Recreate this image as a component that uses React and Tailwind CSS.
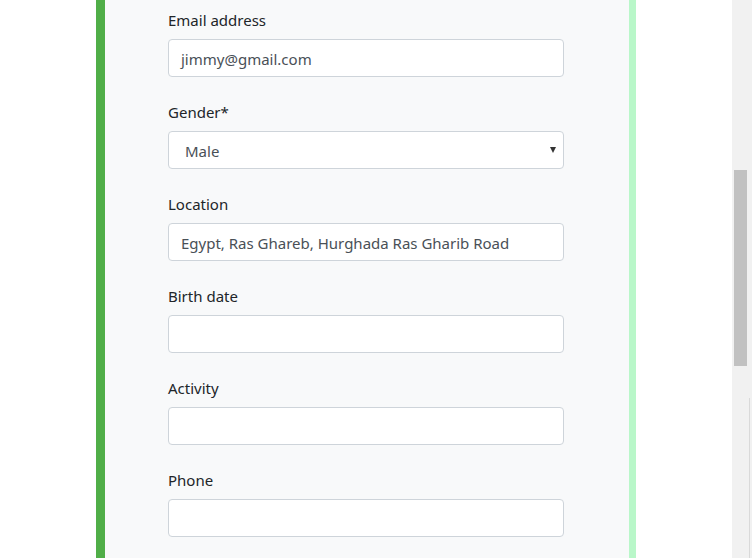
export default function App() {
  const fields = [
    { label: "Email address", value: "jimmy@gmail.com" },
    { label: "Gender*", value: "Male", select: true },
    { label: "Location", value: "Egypt, Ras Ghareb, Hurghada Ras Gharib Road" },
    { label: "Birth date", value: "" },
    { label: "Activity", value: "" },
    { label: "Phone", value: "" },
  ];

  return (
    <main
      className="flex h-[558px] w-[752px] overflow-hidden bg-white text-[#212529]"
      style={{ fontFamily: '"Noto Sans", "Open Sans", sans-serif' }}
    >
      <div className="w-[96px] shrink-0" />
      <div className="w-[540px] shrink-0 border-l-[9px] border-r-[7px] border-l-[#50ae48] border-r-[#b9f7c9] bg-[#f8f9fa] pl-[63px] pt-[7px]">
        {fields.map((f) => (
          <div key={f.label} className="mb-[22px] w-[396px]">
            <label className="mb-[7px] block pt-px text-[15px] leading-6">{f.label}</label>
            {f.select ? (
              <div className="relative flex h-[38px] items-center rounded border border-[#ced4da] bg-white pl-4 pt-[2px] text-[15px] text-[#495057]">
                {f.value}
                <span className="absolute right-[7px] top-[15px] h-0 w-0 border-x-[3.5px] border-t-[6px] border-x-transparent border-t-[#333]" />
              </div>
            ) : (
              <div className="flex h-[38px] items-center rounded border border-[#ced4da] bg-white px-3 pt-[2px] text-[15px] text-[#495057]">
                {f.value}
              </div>
            )}
          </div>
        ))}
      </div>
      <div className="flex-1" />
      <div className="relative w-[20px] shrink-0 bg-[#f1f1f1]">
        <div className="mt-[170px] ml-[2px] h-[196px] w-[13px] bg-[#c1c1c1]" />
        <div className="absolute left-[17px] top-[398px] h-[160px] w-px bg-[#d9d9d9]" />
      </div>
    </main>
  );
}
